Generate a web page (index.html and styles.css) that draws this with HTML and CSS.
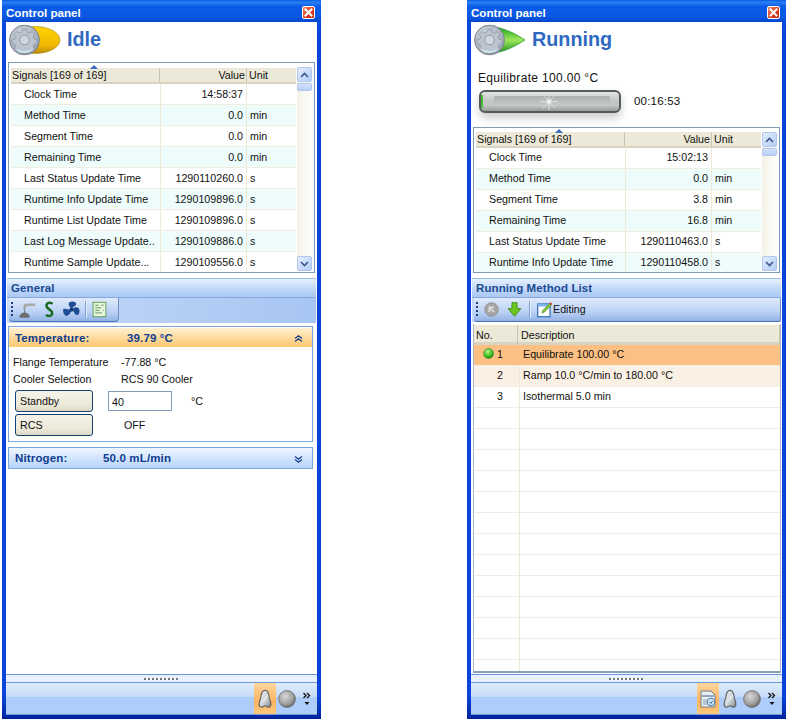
FILE: index.html
```html
<!DOCTYPE html>
<html lang="en">
<head>
<meta charset="utf-8">
<title>Control panel</title>
<link rel="stylesheet" href="styles.css">
</head>
<body>
<svg class="defs" width="0" height="0" aria-hidden="true">
  <defs>
    <radialGradient id="gearBg" cx="0.4" cy="0.35" r="0.8"><stop offset="0" stop-color="#d4d9e0"/><stop offset="0.7" stop-color="#a6aebb"/><stop offset="1" stop-color="#767e88"/></radialGradient>
    <linearGradient id="yellow" x1="0" y1="0" x2="0" y2="1"><stop offset="0" stop-color="#ffd400"/><stop offset="0.7" stop-color="#f2b705"/><stop offset="1" stop-color="#b98a08"/></linearGradient>
    <linearGradient id="green" x1="0" y1="0" x2="0" y2="1"><stop offset="0" stop-color="#18a018"/><stop offset="0.5" stop-color="#9ee85a"/><stop offset="1" stop-color="#168c18"/></linearGradient>
    <radialGradient id="disk" cx="0.4" cy="0.35" r="0.75"><stop offset="0" stop-color="#d8d8d8"/><stop offset="0.6" stop-color="#a0a0a0"/><stop offset="1" stop-color="#505050"/></radialGradient>
    <linearGradient id="bell" x1="0" y1="0" x2="1" y2="1"><stop offset="0" stop-color="#f2f2f2"/><stop offset="0.6" stop-color="#c8d0d4"/><stop offset="1" stop-color="#7c7c7c"/></linearGradient>
    <radialGradient id="dot" cx="0.4" cy="0.3" r="0.8"><stop offset="0" stop-color="#b6f48a"/><stop offset="0.6" stop-color="#3bc01e"/><stop offset="1" stop-color="#10700c"/></radialGradient>
    <symbol id="gear" viewBox="0 0 32 32">
      <circle cx="16" cy="16" r="15.4" fill="url(#gearBg)" stroke="#79818b" stroke-width="1"/>
      <path d="M14 5h4l.6 3 2.6 1 2.5-1.700 2.900 2.900L25 12.700l1 2.500 3 .6v4l-3 .6-1 2.500 1.700 2.500-2.900 2.900-2.500-1.700-2.600 1-.6 2.400h-4l-.6-2.400-2.600-1-2.500 1.700-2.900-2.900L7 22.900l-1-2.500-3-.6v-4l3-.6 1-2.500-1.700-2.500 2.900-2.900 2.500 1.700 2.600-1z" fill="#bcc4d0" stroke="#8d96a3" stroke-width=".8"/>
      <circle cx="16" cy="16" r="5" fill="#cfd7de" stroke="#8d97a3"/>
      <path d="M8 25q8 5 16 0l-2 3q-6 2-12 0z" fill="#d5eef2"/>
    </symbol>
    <symbol id="bellIcon" viewBox="0 0 18 22">
      <path d="M9 1.500c-3.200 0-4 3-4.500 7-.4 3-2 5.500-2 8 0 2 1.200 3.500 3 3.500 1.500 0 2-1.500 3.500-1.500s2 1.500 3.500 1.500c1.800 0 3-1.500 3-3.500 0-2.500-1.600-5-2-8-.5-4-1.300-7-4.500-7z" fill="url(#bell)" stroke="#5f5f5f" stroke-width="1.200"/>
      <path d="M5.500 14l3.500-3 3-4" fill="none" stroke="#fff" stroke-width="1"/>
    </symbol>
    <symbol id="diskIcon" viewBox="0 0 18 18">
      <circle cx="9" cy="9" r="8.400" fill="url(#disk)" stroke="#6b6b6b" stroke-width=".8"/>
    </symbol>
    <symbol id="moreIcon" viewBox="0 0 8 14">
      <path d="M.5 1l2.500 2.500L.5 6M4 1l2.500 2.500L4 6" fill="none" stroke="#111" stroke-width="1.300"/>
      <path d="M1.500 10h5L4 13z" fill="#111"/>
    </symbol>
    <symbol id="upIcon" viewBox="0 0 9 7"><path d="M1 3.500L4.500 .8 8 3.500M1 6.500l3.500-2.700L8 6.500" fill="none" stroke="#123a86" stroke-width="1.200"/></symbol>
    <symbol id="downIcon" viewBox="0 0 9 7"><path d="M1 .5l3.500 2.700L8 .5M1 3.500l3.500 2.700L8 3.500" fill="none" stroke="#123a86" stroke-width="1.200"/></symbol>
    <symbol id="closeIcon" viewBox="0 0 13 13"><path d="M3.500 3.500l6 6m0-6l-6 6" stroke="#fff" stroke-width="2" stroke-linecap="square"/></symbol>
    <symbol id="arrUp" viewBox="0 0 9 6"><path d="M1 5l3.500-3.500L8 5" fill="none" stroke="#3a5a90" stroke-width="1.700"/></symbol>
    <symbol id="arrDown" viewBox="0 0 9 6"><path d="M1 1l3.500 3.500L8 1" fill="none" stroke="#3a5a90" stroke-width="1.700"/></symbol>
  </defs>
</svg>

<div class="desktop">
  <section class="window">
    <header class="titlebar">
      <span class="title">Control panel</span>
      <span class="close"><svg class="closeglyph"><use href="#closeIcon"/></svg></span>
    </header>
    <div class="client">
      <div class="status">
        <svg class="status-icon" viewBox="0 0 52 32">
          <ellipse cx="26" cy="16" rx="25" ry="13.500" fill="url(#yellow)" stroke="#a98410" stroke-width=".6"/>
          <use href="#gear" width="31" height="31" x="0" y=".5"/>
        </svg>
        <span class="status-text">Idle</span>
      </div>
      <div class="signals tall">
        <div class="sig-main">
          <div class="sig-head"><span class="sort"></span><span class="h1">Signals [169 of 169]</span><span class="h2">Value</span><span class="h3">Unit</span></div>
          <div class="sig-row"><span class="c1">Clock Time</span><span class="c2">14:58:37</span><span class="c3"></span></div>
          <div class="sig-row alt"><span class="c1">Method Time</span><span class="c2">0.0</span><span class="c3">min</span></div>
          <div class="sig-row"><span class="c1">Segment Time</span><span class="c2">0.0</span><span class="c3">min</span></div>
          <div class="sig-row alt"><span class="c1">Remaining Time</span><span class="c2">0.0</span><span class="c3">min</span></div>
          <div class="sig-row"><span class="c1">Last Status Update Time</span><span class="c2">1290110260.0</span><span class="c3">s</span></div>
          <div class="sig-row alt"><span class="c1">Runtime Info Update Time</span><span class="c2">1290109896.0</span><span class="c3">s</span></div>
          <div class="sig-row"><span class="c1">Runtime List Update Time</span><span class="c2">1290109896.0</span><span class="c3">s</span></div>
          <div class="sig-row alt"><span class="c1">Last Log Message Update..</span><span class="c2">1290109886.0</span><span class="c3">s</span></div>
          <div class="sig-row"><span class="c1">Runtime Sample Update...</span><span class="c2">1290109556.0</span><span class="c3">s</span></div>
        </div>
        <div class="scroll">
          <span class="sbtn"><svg class="sarrow"><use href="#arrUp"/></svg></span>
          <span class="sthumb"></span>
          <span class="sfill"></span>
          <span class="sbtn"><svg class="sarrow"><use href="#arrDown"/></svg></span>
        </div>
      </div>
      <h2 class="section">General</h2>
      <div class="toolstrip">
        <div class="tools">
          <span class="grip"></span>
          <svg class="tool" viewBox="0 0 20 20"><path d="M19 3H9C6 3 5 5 5 8v2h3V9c0-2 1-3 3-3h8V3z" fill="#a9a9a9"/><path d="M6.500 10v4M1 19c0-3 2.500-5 5.500-5s5.500 2 5.500 5z" fill="#6f6f6f" stroke="#666"/></svg>
          <svg class="tool" viewBox="0 0 20 20"><path d="M13.500 3.500C12 1.500 7.500 1.500 6.500 4.500c-.8 2.500 1.500 4 3.500 5.500s4 3 3 5.500c-1 2.800-5.500 2.800-7 .8" fill="none" stroke="#1a6e1e" stroke-width="3"/></svg>
          <svg class="tool" viewBox="0 0 20 20"><circle cx="10" cy="10" r="2.500" fill="#14386f"/><path d="M10 9C7.500 7 5.500 4.500 7.500 1.500c3.500-2 8-.5 8 2 0 2.500-3.500 2.500-5.500 5.500zM11 10c2-2.500 4.500-3.500 7.500-1.500 2 3.500.5 8-2 8s-3.500-3.500-5.500-6.500zM10 11c-1 3-3 6.500-6.500 6.500-3-1.500-4-5.500-3-8 2-1 5.500.5 9.500 1.500z" fill="#1d4c92"/></svg>
          <span class="tsep"></span>
          <svg class="tool" viewBox="0 0 20 20"><rect x="2.500" y="1.500" width="15" height="17" fill="#eaf5e0" stroke="#4f9a45"/><path d="M5 5h4M5 8h7M5 11h5M5 14h8M12 5h3M14 11h1" stroke="#4f8a45"/></svg>
        </div>
      </div>
      <div class="fold open">
        <div class="fold-head orange"><span class="f-label">Temperature:</span><span class="f-value">39.79 °C</span><svg class="chev"><use href="#upIcon"/></svg></div>
        <div class="fold-body">
          <div class="kv"><span class="k">Flange Temperature</span><span>-77.88 °C</span></div>
          <div class="kv"><span class="k">Cooler Selection</span><span>RCS 90 Cooler</span></div>
          <div class="ctl">
            <button class="btn" type="button">Standby</button>
            <input class="num" type="text" value="40" aria-label="Setpoint">
            <span class="deg">°C</span>
          </div>
          <div class="ctl">
            <button class="btn" type="button">RCS</button>
            <span class="off">OFF</span>
          </div>
        </div>
      </div>
      <div class="fold closed">
        <div class="fold-head"><span class="f-label short">Nitrogen:</span><span class="f-value">50.0 mL/min</span><svg class="chev"><use href="#downIcon"/></svg></div>
      </div>
      <div class="spacer"></div>
      <div class="splitter"><span class="dots"></span></div>
      <footer class="bottom">
        <span class="bt active"><svg class="ico"><use href="#bellIcon"/></svg></span>
        <span class="bt"><svg class="ico round"><use href="#diskIcon"/></svg></span>
        <span class="bt more"><svg class="moreglyph"><use href="#moreIcon"/></svg></span>
      </footer>
    </div>
  </section>

  <section class="window">
    <header class="titlebar">
      <span class="title">Control panel</span>
      <span class="close"><svg class="closeglyph"><use href="#closeIcon"/></svg></span>
    </header>
    <div class="client">
      <div class="status">
        <svg class="status-icon" viewBox="0 0 52 32">
          <path d="M14 2.500c12 0 24 5 37 13.500C38 24.500 26 29.500 14 29.500z" fill="url(#green)" stroke="#12881a" stroke-width=".6"/>
          <use href="#gear" width="31" height="31" x="0" y=".5"/>
        </svg>
        <span class="status-text">Running</span>
      </div>
      <div class="step">Equilibrate 100.00 °C</div>
      <div class="progress-row">
        <div class="bar">
          <span class="bar-fill"></span>
          <span class="bar-inner"></span>
          <svg class="bar-star" viewBox="0 0 24 19"><path d="M3 9.500h18M12 1v17M6 3l12 13M18 3L6 16" stroke="#e8ebe8" stroke-width="1" fill="none" opacity=".75"/><circle cx="12" cy="9.500" r="2.500" fill="#f4f6f4" opacity=".7"/></svg>
        </div>
        <span class="elapsed">00:16:53</span>
      </div>
      <div class="signals short">
        <div class="sig-main">
          <div class="sig-head"><span class="sort"></span><span class="h1">Signals [169 of 169]</span><span class="h2">Value</span><span class="h3">Unit</span></div>
          <div class="sig-row"><span class="c1">Clock Time</span><span class="c2">15:02:13</span><span class="c3"></span></div>
          <div class="sig-row alt"><span class="c1">Method Time</span><span class="c2">0.0</span><span class="c3">min</span></div>
          <div class="sig-row"><span class="c1">Segment Time</span><span class="c2">3.8</span><span class="c3">min</span></div>
          <div class="sig-row alt"><span class="c1">Remaining Time</span><span class="c2">16.8</span><span class="c3">min</span></div>
          <div class="sig-row"><span class="c1">Last Status Update Time</span><span class="c2">1290110463.0</span><span class="c3">s</span></div>
          <div class="sig-row alt"><span class="c1">Runtime Info Update Time</span><span class="c2">1290110458.0</span><span class="c3">s</span></div>
        </div>
        <div class="scroll">
          <span class="sbtn"><svg class="sarrow"><use href="#arrUp"/></svg></span>
          <span class="sthumb"></span>
          <span class="sfill"></span>
          <span class="sbtn"><svg class="sarrow"><use href="#arrDown"/></svg></span>
        </div>
      </div>
      <h2 class="section">Running Method List</h2>
      <div class="toolstrip wide">
        <div class="tools full">
          <span class="grip"></span>
          <svg class="tool" viewBox="0 0 20 20"><circle cx="10" cy="10" r="8" fill="#a6a6a6" stroke="#8c8c8c"/><path d="M6.500 6.500h6.500v1.800h-3.200l4 4-1.300 1.300-4-4v3.200H6.500z" fill="#e0e0e0"/></svg>
          <svg class="tool" viewBox="0 0 20 20"><path d="M7 2h6v7h4.500L10 18 2.500 9H7z" fill="#6fc41e" stroke="#2f8a12"/></svg>
          <span class="tsep"></span>
          <svg class="tool" viewBox="0 0 20 20"><rect x="2" y="3.500" width="14.500" height="15" fill="#fff" stroke="#2b6cb8" stroke-width="1.400"/><path d="M2 3.500h14.500v3H2z" fill="#7fb2e6"/><path d="M7 14l1-3 8-8 2 2-8 8z" fill="#8ac63f" stroke="#3f7f1a" stroke-width=".7"/><path d="M15.500 2.500l2.500 2.500 1-1.500-1.500-2z" fill="#d8412a"/></svg>
          <span class="tlabel">Editing</span>
        </div>
      </div>
      <div class="list">
        <div class="list-head"><span class="l1">No.</span><span class="l2">Description</span></div>
        <div class="list-row current"><span class="n"><svg class="led" viewBox="0 0 12 12"><circle cx="6" cy="6" r="5.400" fill="url(#dot)" stroke="#1d7a16" stroke-width=".6"/></svg>1</span><span class="d">Equilibrate 100.00 °C</span></div>
        <div class="list-row next"><span class="n">2</span><span class="d">Ramp 10.0 °C/min to 180.00 °C</span></div>
        <div class="list-row"><span class="n">3</span><span class="d">Isothermal 5.0 min</span></div>
        <div class="list-row blank"><span class="n"></span><span class="d"></span></div>
      </div>
      <div class="splitter"><span class="dots"></span></div>
      <footer class="bottom">
        <span class="bt active"><svg class="ico" viewBox="0 0 18 18"><path d="M2 1h10l4 4v12H2z" fill="#e8eef2" stroke="#6c7a88"/><path d="M3 5h12v2H3z" fill="#8fa8c0"/><path d="M4 9h4v6H4z" fill="#b8c6d2"/><circle cx="12" cy="12" r="3.800" fill="#cfe3f2" stroke="#4d7ea8"/><path d="M10.500 12l1.500 1.500 1.500-2.500" fill="none" stroke="#2a6aa0"/></svg></span>
        <span class="bt"><svg class="ico"><use href="#bellIcon"/></svg></span>
        <span class="bt"><svg class="ico round"><use href="#diskIcon"/></svg></span>
        <span class="bt more"><svg class="moreglyph"><use href="#moreIcon"/></svg></span>
      </footer>
    </div>
  </section>
</div>
</body>
</html>
```

FILE: styles.css
```css
* { box-sizing: border-box; }
html, body { margin: 0; padding: 0; background: #fff; }
body { font: 10.7px/1 "Liberation Sans", Arial, sans-serif; color: #111; overflow: hidden; }
.defs { position: absolute; }
.desktop { display: flex; gap: 146px; padding-left: 2px; height: 719px; }

.window {
  width: 319px; height: 719px; display: flex; flex-direction: column;
  background: #0a44d8;
  border-radius: 5px 5px 0 0;
  padding: 0 4px 3px 4px;
  border-bottom: 1px solid #00209c;
  background-image: linear-gradient(#0a5ae6, #0a44d8 5%, #0a44d8 97%, #00249e);
}
.titlebar {
  height: 22px; margin: 0 -4px; padding: 0 6px 0 4px; flex: none;
  display: flex; align-items: center; justify-content: space-between;
  background: linear-gradient(#0a5ce2, #2a80f4 10%, #0a5ce8 30%, #0a58e4 75%, #0648cc);
}
.title { color: #fff; font-weight: bold; font-size: 11.6px; padding-top: 4px; }
.close {
  width: 13px; height: 13px; margin-top: 3px; display: block; border: 1px solid #fff; border-radius: 2px;
  background: linear-gradient(135deg, #f08a6c, #d8391a 60%, #b82a10);
  position: relative;
}
.closeglyph { width: 13px; height: 13px; position: absolute; left: -1px; top: -1px; display: block; }

.client { flex: 1; min-height: 0; background: #fff; display: flex; flex-direction: column; }
.status { height: 36px; flex: none; display: flex; align-items: center; padding: 0 0 0 3px; gap: 6px; }
.status-icon { width: 52px; height: 32px; }
.status-text { font-size: 19.8px; font-weight: bold; color: #2f69bf; }

.step { height: 22px; flex: none; margin-top: 9px; padding: 5px 0 0 7px; font-size: 12px; letter-spacing: .33px; }
.progress-row { height: 38px; flex: none; display: flex; align-items: flex-start; gap: 13px; padding: 1px 0 0 8px; }
.bar {
  width: 142px; height: 23px; border-radius: 6px; border: 2px solid #555b5a; position: relative;
  background: linear-gradient(#e2e6e2, #c4c8c4 45%, #c4c8c4 70%, #989c98);
  box-shadow: 0 5px 8px rgba(120,120,120,.38);
}
.bar-fill { position: absolute; left: 0; top: 3px; bottom: 3px; width: 2px; background: #47bb3a; }
.bar-inner { position: absolute; left: 13px; right: 9px; top: 4px; height: 10px; background: linear-gradient(#acb0ac, #c8ccc8); border-radius: 2px; }
.bar-star { position: absolute; left: 56px; top: 0; width: 24px; height: 19px; display: block; }
.elapsed { font-size: 11.5px; letter-spacing: .2px; padding-top: 6px; }

.signals {
  flex: none; margin: 0 2px; border: 1px solid #7f9db9; display: flex; padding: 1px 2px 0; background: #fff;
}
.signals.tall { margin-top: 4px; height: 211px; }
.signals.short { height: 146px; }
.sig-main { flex: 1; min-width: 0; overflow: hidden; }
.sig-head {
  height: 16px; margin-top: 4px; display: grid; grid-template-columns: 149px 87px 1fr; align-items: center; position: relative;
  background: #ece9d8; border-bottom: 2px solid #d8d4c2;
}
.short .sig-head { margin-top: 3px; }
.sort { position: absolute; left: 79px; top: -3px; width: 0; height: 0; border: 4px solid transparent; border-top: 0; border-bottom: 4px solid #3a6cc0; }
.h1 { padding-left: 1px; border-right: 1px solid #c8c5b2; height: 14px; line-height: 14px; }
.h2 { text-align: right; padding-right: 1px; border-right: 1px solid #c8c5b2; height: 14px; line-height: 14px; }
.h3 { padding-left: 2px; height: 14px; line-height: 14px; }
.sig-row { height: 21px; display: grid; grid-template-columns: 150px 86px 1fr; align-items: stretch; border-bottom: 1px solid #f0eee2; line-height: 20px; }
.short .sig-row { line-height: 18px; }
.sig-row.alt { background: #eefcfc; }
.c1 { padding-left: 13px; border-right: 1px solid #ece9d8; white-space: nowrap; overflow: hidden; }
.c2 { padding-right: 3px; text-align: right; border-right: 1px solid #ece9d8; }
.c3 { padding-left: 3px; }

.scroll { width: 15px; margin: 3px 0 1px 1px; display: flex; flex-direction: column; background: linear-gradient(90deg, #f4f2e8, #fdfdfa); }
.sbtn { height: 15px; flex: none; display: flex; align-items: center; justify-content: center; border: 1px solid #b0c6ec; border-radius: 2px; background: linear-gradient(135deg, #e4eefe, #b4ccf6); }
.sarrow { width: 9px; height: 6px; display: block; }
.sthumb { height: 8px; margin-top: 1px; flex: none; border: 1px solid #b0c6ec; border-radius: 2px; background: linear-gradient(#d4e2fb, #b8cef6); }
.sfill { flex: 1; }

.section {
  margin: 5px 1px 0; height: 19px; padding: 3px 0 0 4px; flex: none; font-size: 11.5px; line-height: 13px; font-weight: bold; color: #1a4a90;
  background: linear-gradient(#e8f2fe, #c6dcfb 45%, #aac8f4); border-top: 1px solid #9cbcec; letter-spacing: .1px;
}
.toolstrip { height: 26px; flex: none; margin: 0 1px; background: linear-gradient(90deg, #c4d8f8, #a8c6f2); border-top: 1px solid #87a8dc; padding: 0 0 0 2px; }
.toolstrip.wide { height: 25px; }
.tools {
  width: 110px; height: 24px; display: flex; align-items: center; gap: 5px; padding-left: 2px;
  background: linear-gradient(#dfeafc, #bcd2f5 60%, #92b2e4);
  border-bottom: 1px solid #4a74b4; border-right: 1px solid #6a90c8; border-radius: 0 0 4px 4px;
}
.tools.full { width: 100%; gap: 6px; border-radius: 0 0 3px 3px; }
.grip { width: 2px; height: 15px; margin-right: 1px; background: repeating-linear-gradient(#1d3f7c 0 2px, transparent 2px 4px); }
.tool { width: 17px; height: 17px; display: block; }
.tools.full .grip + .tool { margin-left: -2px; }
.tsep { width: 1px; height: 17px; background: #7fa0d4; box-shadow: 1px 0 #e6effd; }
.tlabel { margin-left: -6px; }

.fold { flex: none; border: 1px solid #7ba5dc; margin: 3px 4px 0 2px; }
.fold.open { height: 116px; }
.fold.closed { margin-top: 5px; height: 22px; }
.fold-head {
  height: 20px; display: flex; align-items: center; padding: 2px 9px 0 6px; font-weight: bold; font-size: 11.5px; color: #103c90;
  background: linear-gradient(#eef6ff, #b6d4fb); letter-spacing: .15px;
}
.fold-head.orange { height: 20px; background: linear-gradient(#fff0cf, #fcc76e); border-top: 1px solid #fff; }
.f-label { width: 112px; }
.f-label.short { width: 88px; }
.f-value { flex: 1; }
.chev { width: 9px; height: 7px; display: block; }
.fold-body { padding: 7px 0 0 4px; }
.kv { display: flex; height: 17px; line-height: 17px; }
.k { width: 108px; }
.ctl { display: flex; align-items: center; }
.ctl + .ctl { margin-top: 2px; }
.kv + .ctl { margin-top: 2px; }
.btn {
  width: 78px; height: 22px; margin: 0 0 0 2px; padding: 0 0 0 4px; text-align: left; font: inherit; color: inherit;
  background: linear-gradient(#f5f3ea, #ece9d8 70%, #dcd8c4); border: 1px solid #14406e; border-radius: 3px;
}
.num { width: 64px; height: 20px; margin-left: 15px; padding: 1px 0 0 3px; border: 1px solid #7f9db9; font: inherit; color: inherit; background: #fff; }
.deg { margin-left: 19px; }
.off { margin-left: 31px; }

.spacer { flex: 1; }
.list {
  flex: 1; min-height: 0; overflow: hidden; margin: 2px 1px 0 2px; border-left: 1px solid #a9b8c9; border-right: 1px solid #a9b8c9; border-bottom: 2px solid #8aa0b8; display: flex; flex-direction: column;
  padding-top: 1px;
}
.list-head { height: 20px; flex: none; display: grid; grid-template-columns: 44px 1fr; background: #ece9d8; border-bottom: 3px solid #d8d4c2; line-height: 21px; }
.l1 { padding-left: 2px; border-right: 1px solid #c8c5b2; }
.l2 { padding-left: 3px; border-right: 1px solid #c8c5b2; }
.list-row { height: 21px; flex: none; display: grid; grid-template-columns: 46px 1fr; line-height: 18px; border-bottom: 1px solid #f0eee2; }
.list-row.current { background: #fdc083; }
.list-row.next { background: #fbf0e4; }
.list-row.blank { flex: 1; background: repeating-linear-gradient(#fff 0 20px, #f0eee2 20px 21px); border-bottom: 0; }
.n { border-right: 1px solid #ece9d8; text-align: right; padding-right: 16px; position: relative; }
.current .n { border-right-color: transparent; }
.d { padding-left: 3px; }
.led { width: 11px; height: 11px; position: absolute; left: 9px; top: 3px; }

.splitter { height: 9px; flex: none; margin-top: 1px; background: #e6f0fe; border-top: 1px solid #6a9ad8; border-bottom: 1px solid #6a9ad8; display: flex; align-items: center; justify-content: center; }
.dots { width: 35px; height: 2px; background: repeating-linear-gradient(90deg, #6b7686 0 2px, #fff 2px 4px); }
.bottom { height: 32px; flex: none; display: flex; justify-content: flex-end; padding-right: 1px; border-bottom: 1px solid #6a9ad8; background: linear-gradient(#e0ecfd, #c4dbf9 45%, #aecdfb 46%, #aecdfb); }
.bt { width: 22px; height: 31px; display: flex; align-items: center; justify-content: center; }
.bt.active { background: linear-gradient(#ffd7a0, #fdb35f 60%, #fdc97c); }
.bt.more { width: 18px; }
.ico { width: 18px; height: 20px; display: block; }
.ico.round { width: 18px; height: 18px; }
.moreglyph { width: 8px; height: 14px; display: block; }
```
